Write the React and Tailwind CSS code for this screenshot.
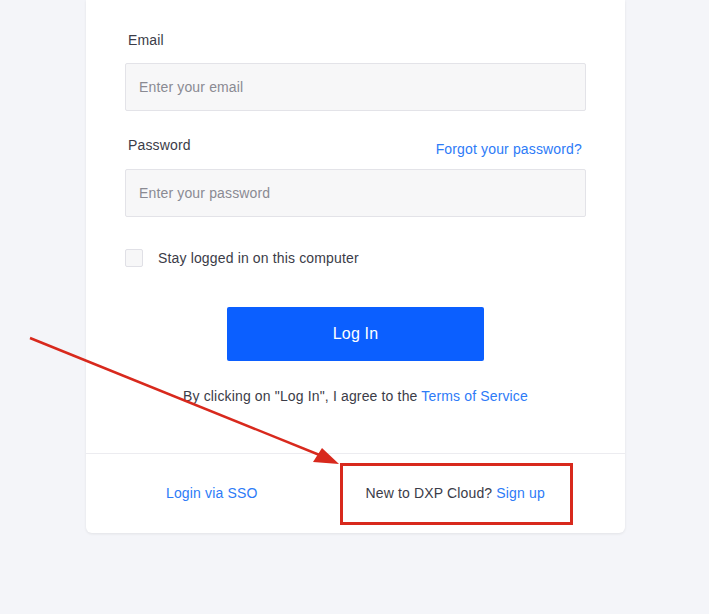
import React from 'react';

const font = { fontFamily: '"Liberation Sans", Arial, sans-serif' };

export default function App() {
    return (
        <div className="relative min-h-[614px] w-full bg-[#f4f5f9] text-[#393a4a] tracking-[0.15px]" style={font}>
            <div className="ml-[86px] w-[539px] bg-white rounded-b-[6px] shadow-[0_1px_3px_rgba(0,0,0,0.08)]">
                {/* Form */}
                <div className="px-[39px] pt-[30px] pb-[47px]">
                    <label className="block pl-[3px] text-[14px] leading-[20px] text-[#3b3c48] mb-[13px]">Email</label>
                    <input
                        type="email"
                        placeholder="Enter your email"
                        className="block w-full h-[48px] px-[13px] rounded-[2px] border border-[#e3e3e8] bg-[#f7f7f8] text-[14px] outline-none placeholder:text-[#8a8a93]"
                    />

                    <div className="flex items-end justify-between mt-[24px] mb-[14px] pr-[4px]">
                        <label className="block pl-[3px] text-[14px] leading-[20px] text-[#3b3c48]">Password</label>
                        <a className="text-[14px] leading-[20px] text-[#2d7bf7] translate-y-[4px]">Forgot your password?</a>
                    </div>
                    <input
                        type="password"
                        placeholder="Enter your password"
                        className="block w-full h-[48px] px-[13px] rounded-[2px] border border-[#e3e3e8] bg-[#f7f7f8] text-[14px] outline-none placeholder:text-[#8a8a93]"
                    />

                    <label className="flex items-center gap-[15px] mt-[32px]">
                        <span className="block w-[18px] h-[18px] rounded-[2px] border border-[#e0e0e6] bg-[#f7f7f8]" />
                        <span className="text-[14px] leading-[18px] text-[#3b3c48]">Stay logged in on this computer</span>
                    </label>

                    <div className="flex justify-center mt-[40px]">
                        <button className="w-[257px] h-[54px] rounded-[2px] bg-[#0b5fff] text-white text-[16px]">
                            Log In
                        </button>
                    </div>

                    <p className="mt-[25px] text-center text-[14px] leading-[20px] text-[#3b3c48]">
                        By clicking on "Log In", I agree to the <a className="text-[#2d7bf7]">Terms of Service</a>
                    </p>
                </div>

                {/* Footer */}
                <div className="flex items-center h-[80px] border-t border-[#ececf0] pl-[80px] gap-[108px] text-[14px]">
                    <a className="text-[#2d7bf7]">Login via SSO</a>
                    <span className="text-[#3b3c48]">
                        New to DXP Cloud? <a className="text-[#2d7bf7]">Sign up</a>
                    </span>
                </div>
            </div>

            {/* Annotation */}
            <div className="absolute left-[340px] top-[463px] w-[233px] h-[62px] border-[3px] border-[#d8291d]" />
            <svg className="absolute left-0 top-0 pointer-events-none" width="709" height="614">
                <line x1="30" y1="338" x2="322" y2="456" stroke="#d8291d" strokeWidth="2.5" />
                <polygon points="339,464 313,462 322,448" fill="#d8291d" />
            </svg>
        </div>
    );
}
